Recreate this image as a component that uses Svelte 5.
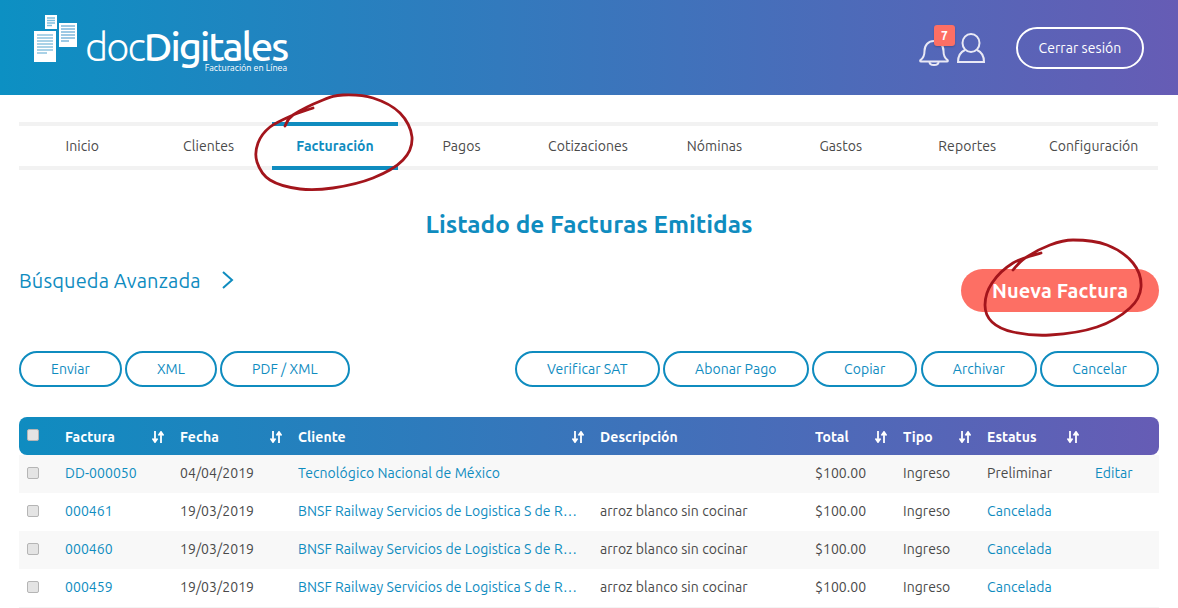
<script lang="ts">
  const tabs = ['Inicio','Clientes','Facturación','Pagos','Cotizaciones','Nóminas','Gastos','Reportes','Configuración'];
  const left = ['Enviar','XML','PDF / XML'];
  const right = ['Verificar SAT','Abonar Pago','Copiar','Archivar','Cancelar'];
  const bnsf = 'BNSF Railway Servicios de Logistica S de R.L. de C.V.';
  const rows = [
    { id:'DD-000050', fecha:'04/04/2019', cliente:'Tecnológico Nacional de México', desc:'', estatus:'Preliminar', edit:true },
    { id:'000461', fecha:'19/03/2019', cliente:bnsf, desc:'arroz blanco sin cocinar', estatus:'Cancelada', edit:false },
    { id:'000460', fecha:'19/03/2019', cliente:bnsf, desc:'arroz blanco sin cocinar', estatus:'Cancelada', edit:false },
    { id:'000459', fecha:'19/03/2019', cliente:bnsf, desc:'arroz blanco sin cocinar', estatus:'Cancelada', edit:false },
  ];
  const cols = [
    { label:'Factura', sort:true, w:115 },
    { label:'Fecha', sort:true, w:118 },
    { label:'Cliente', sort:true, w:302 },
    { label:'Descripción', sort:false, w:215 },
    { label:'Total', sort:true, w:88 },
    { label:'Tipo', sort:true, w:84 },
    { label:'Estatus', sort:true, w:108 },
    { label:'', sort:false, w:64 },
  ];

  // hand-drawn circles, traced from the marker strokes
  const circleA = [[285,126],[293,115],[323,100],[343,95],[373,98],[400,113],[412,137],[403,160],[373,178],[333,188],[300,189],[270,180],[257,162],[258,143],[270,127],[293,115],[313,108]];
  const circleB = [[1013,270],[1025,258],[1050,245],[1073,240],[1107,245],[1133,263],[1141,287],[1130,308],[1097,327],[1050,335],[1013,332],[992,322],[985,305],[992,283],[1013,263],[1041,253]];

  function smooth(p: number[][]) {
    let d = `M${p[0][0]} ${p[0][1]}`;
    for (let i = 0; i < p.length - 1; i++) {
      const a = p[Math.max(i - 1, 0)], b = p[i], c = p[i + 1], e = p[Math.min(i + 2, p.length - 1)];
      d += `C${b[0] + (c[0] - a[0]) / 6} ${b[1] + (c[1] - a[1]) / 6} ${c[0] - (e[0] - b[0]) / 6} ${c[1] - (e[1] - b[1]) / 6} ${c[0]} ${c[1]}`;
    }
    return d;
  }
</script>

<div class="page">
  <header class="top">
    <div class="logo">
      <svg class="docs" width="44" height="47" viewBox="0 0 44 47">
        <path d="M11 0h12v14H11zM25 8h18v24H25zM0 16h22v31H0z" fill="#fff"/>
        <path d="M13 3h8M13 5.500h8M13 8h8M13 10.500h5" stroke="#7fc0e0" stroke-width="1.300"/>
        <path d="M27 11h14M27 14h14M27 17h14M27 20h14M27 23h14M27 26h8" stroke="#7fb8dc" stroke-width="1.500"/>
        <path d="M3 20h16M3 23h16M3 26h16M3 29h16M3 32h16M3 35h16M3 38h10" stroke="#8fc3e0" stroke-width="1.500"/>
      </svg>
      <div class="brand">
        <div class="word"><span class="doc">doc</span><span class="dig">Digitales</span></div>
        <div class="sub">Facturación en Línea</div>
      </div>
    </div>
    <div class="actions">
      <div class="bell">
        <svg width="30" height="29" viewBox="0 0 30 29" fill="none" stroke="#e9e9f5" stroke-width="2">
          <path d="M1.500 23c3-2 4-4 4-9 0-6 4-10 9.500-10s9.500 4 9.500 10c0 5 1 7 4 9 .5.500.5 1.500-.5 1.500H2c-1 0-1-1-.5-1.500z" stroke-linejoin="round"/>
          <path d="M10.500 25c0 2 2 3 4.500 3s4.500-1 4.500-3"/>
        </svg>
        <span class="badge">7</span>
      </div>
      <svg class="user" width="28" height="30" viewBox="0 0 28 30" fill="none" stroke="#e9e9f5" stroke-width="2">
        <ellipse cx="14" cy="10" rx="8.500" ry="9"/>
        <path d="M8 17C3.500 19 1 23 1 29h26c0-6-2.500-10-7-12"/>
      </svg>
      <button class="logout">Cerrar sesión</button>
    </div>
  </header>

  <main class="content">
    <nav class="tabs">
      {#each tabs as t}
        <a class="tab" class:active={t === 'Facturación'} href="#top">{t}</a>
      {/each}
    </nav>

    <h1>Listado de Facturas Emitidas</h1>

    <div class="search-row">
      <div class="adv">
        <span>Búsqueda Avanzada</span>
        <svg width="14" height="20" viewBox="0 0 14 20" fill="none" stroke="#0f8cbf" stroke-width="2"><path d="M2 2l9 8-9 8"/></svg>
      </div>
      <button class="new">Nueva Factura</button>
    </div>

    <div class="btn-row">
      <div class="group">
        {#each left as b}<button class="pill">{b}</button>{/each}
      </div>
      <div class="group wide">
        {#each right as b}<button class="pill">{b}</button>{/each}
      </div>
    </div>

    <div class="table">
      <div class="row head">
        <div class="check"><input type="checkbox" /></div>
        {#each cols as c}
          <div class="cell" style="width:{c.w}px">
            <span>{c.label}</span>
            {#if c.sort}
              <svg class="sort" width="12" height="12" viewBox="0 0 12 12" fill="none" stroke="#fff" stroke-width="1.800"><path d="M3 0v11M.5 7.500L3 11l2.500-3.500M9 12V1M6.500 4.500L9 1l2.500 3.500"/></svg>
            {/if}
          </div>
        {/each}
      </div>
      {#each rows as r, i}
        <div class="row" class:odd={i % 2 === 0}>
          <div class="check"><input type="checkbox" /></div>
          <div class="cell link" style="width:{cols[0].w}px">{r.id}</div>
          <div class="cell" style="width:{cols[1].w}px">{r.fecha}</div>
          <div class="cell link" style="width:{cols[2].w}px"><span class="clip">{r.cliente}</span></div>
          <div class="cell" style="width:{cols[3].w}px">{r.desc}</div>
          <div class="cell" style="width:{cols[4].w}px">$100.00</div>
          <div class="cell" style="width:{cols[5].w}px">Ingreso</div>
          <div class="cell" class:link={r.estatus === 'Cancelada'} style="width:{cols[6].w}px">{r.estatus}</div>
          <div class="cell link" style="width:{cols[7].w}px">{r.edit ? 'Editar' : ''}</div>
        </div>
      {/each}
    </div>
  </main>

  <svg class="scribble" width="1178" height="608" viewBox="0 0 1178 608" fill="none" stroke="#a3151c" stroke-width="2.800" stroke-linecap="round">
    <path d={smooth(circleA)}/>
    <path d={smooth(circleB)}/>
  </svg>
</div>

<style>
  :global(body) { margin: 0; background: #fff; }
  .page { position: relative; width: 1178px; height: 608px; overflow: hidden; font-family: Ubuntu, "Open Sans", "Noto Sans", sans-serif; font-size: 14px; letter-spacing: .06px; color: #4a4a4a; }
  .top { height: 95px; display: flex; justify-content: space-between; align-items: flex-start; padding: 0 34px; background: linear-gradient(90deg, #0c90c3, #665cb5); }
  .logo { display: flex; align-items: flex-start; gap: 7px; color: #fff; padding-top: 15px; }
  .brand { line-height: 1; }
  .word { font-size: 40px; letter-spacing: -2px; margin-top: 12px; line-height: 40px; white-space: nowrap; }
  .doc { font-weight: 300; }
  .dig { font-weight: 500; }
  .sub { font-size: 9px; letter-spacing: 0; text-align: right; margin-top: -3px; }
  .actions { display: flex; align-items: flex-start; padding-top: 27px; }
  .bell { position: relative; width: 30px; height: 29px; margin: 10px 8px 0 0; }
  .badge { position: absolute; top: -12px; left: 15px; width: 21px; height: 21px; background: #fd6f64; border-radius: 3px; color: #fff; font-size: 12px; font-weight: 700; display: flex; align-items: center; justify-content: center; box-shadow: 0 1px 2px rgba(0,0,0,.2); }
  .user { margin: 6px 31px 0 0; }
  .logout { width: 128px; height: 42px; border: 2px solid #fff; border-radius: 21px; background: transparent; color: #fff; font: inherit; letter-spacing: inherit; }
  .content { padding: 27px 19px 0; }
  .tabs { display: flex; height: 40px; margin-right: 1px; padding-right: 1px; border-top: 4px solid #f2f2f2; border-bottom: 4px solid #f2f2f2; }
  .tab { flex: 1; display: flex; align-items: center; justify-content: center; color: #4a4a4a; text-decoration: none; margin: -4px 0; border-top: 4px solid transparent; border-bottom: 4px solid transparent; }
  .tab.active { color: #0f8cbf; font-weight: 700; border-color: #0f8cbf; }
  h1 { margin: 38px 0 0; text-align: center; font-size: 24.400px; font-weight: 700; letter-spacing: 0; color: #0f8cbf; line-height: 32px; }
  .search-row { display: flex; justify-content: space-between; align-items: center; margin-top: 14px; height: 60px; }
  .adv { display: flex; align-items: center; gap: 20px; font-size: 20px; letter-spacing: .15px; color: #0f8cbf; margin-top: -8px; }
  .new { width: 198px; height: 43px; border: none; border-radius: 22px; background: #fd6f64; color: #fff; font: inherit; font-size: 20px; letter-spacing: .1px; font-weight: 700; margin-top: 12px; }
  .btn-row { display: flex; justify-content: space-between; margin-top: 37px; }
  .group { display: flex; gap: 3px; }
  .group.wide { gap: 3.500px; }
  .pill { height: 36px; padding: 0 30px; border: 2px solid #0f8cbf; border-radius: 18px; background: #fff; color: #0f8cbf; font: inherit; letter-spacing: inherit; }
  .table { margin-top: 30px; }
  .row { display: flex; align-items: center; height: 38px; }
  .row:last-child { box-shadow: 0 1px 0 #f4f4f4; }
  .row.odd { background: #f8f8f8; }
  .head { background: linear-gradient(90deg, #0f8cc0, #665cb5); color: #fff; font-weight: 700; border-radius: 8px; }
  .check { width: 46px; padding-left: 8px; box-sizing: border-box; display: flex; }
  .check input { appearance: none; width: 12px; height: 12px; margin: -2px 0 0; background: #e4e4e4; border: 1px solid #b5b5b5; border-radius: 2px; box-sizing: border-box; }
  .cell { display: flex; align-items: center; justify-content: space-between; padding: 0 16px 2px 0; box-sizing: border-box; white-space: nowrap; overflow: hidden; }
  .head .cell { padding: 2px 16px 0 0; }
  .link { color: #0f8cbf; }
  .clip { overflow: hidden; text-overflow: ellipsis; width: 281px; }
  .scribble { position: absolute; inset: 0; pointer-events: none; }
</style>
